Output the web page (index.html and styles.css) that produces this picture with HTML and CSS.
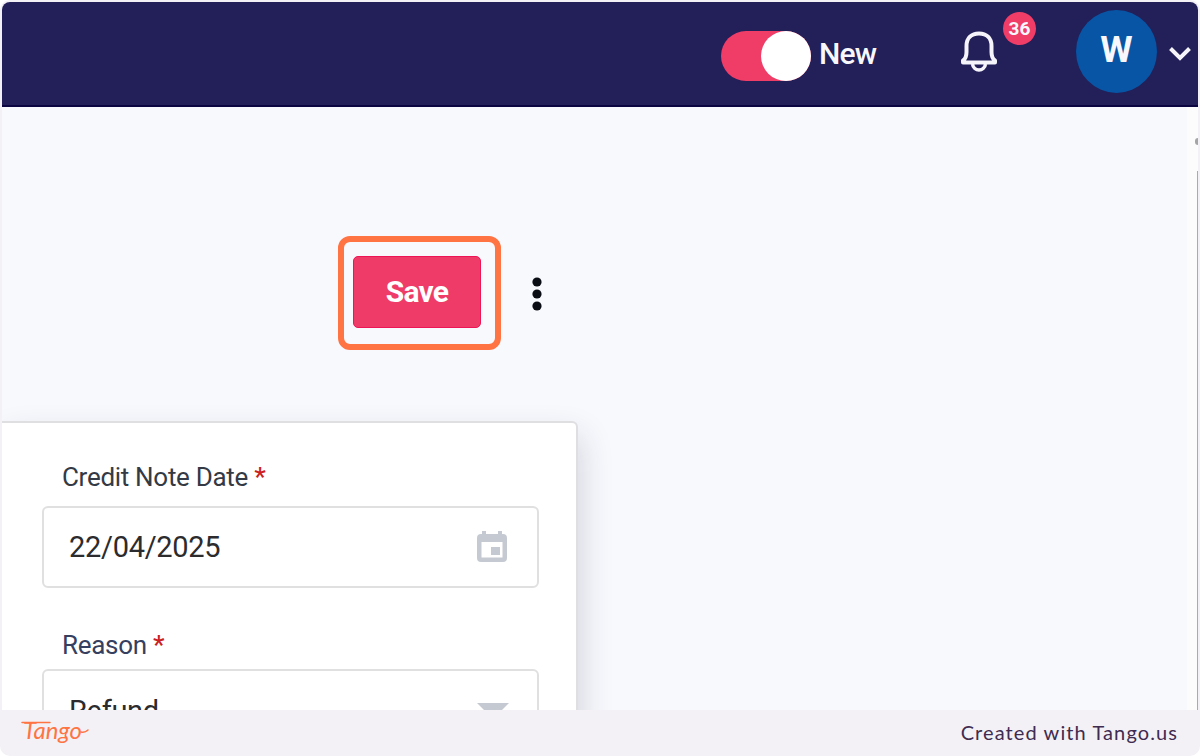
FILE: index.html
```html
<!DOCTYPE html>
<html lang="en">
<head>
    <meta charset="UTF-8">
    <meta name="viewport" content="width=device-width, initial-scale=1.0">
    <title>Credit Note - Save</title>
    <link rel="stylesheet" href="styles.css">
</head>
<body>
    <div class="frame">
        <div class="screen">
            <header class="topbar">
                <div class="toggle"><div class="knob"></div></div>
                <span class="toggle-label">New</span>
                <div class="bell">
                    <svg width="40" height="44" viewBox="0 0 40 44" fill="none" stroke="#f4f4fa" stroke-width="4" stroke-linejoin="round">
                        <path d="M4 33.500H36V31.500C33.500 30 32.500 27 32.500 23V17C32.500 9 27.500 4.500 20 4.500S7.500 9 7.500 17V23C7.500 27 6.500 30 4 31.500Z"/>
                        <path d="M13.500 35C14 39 17 41 20 41S26 39 26.500 35" stroke-width="3.500"/>
                    </svg>
                    <span class="badge">36</span>
                </div>
                <div class="avatar">W</div>
                <svg class="chevron" width="24" height="16" viewBox="0 0 24 16" fill="none" stroke="#f4f4fa" stroke-width="4">
                    <path d="M2.500 2.500L12 12L21.500 2.500"/>
                </svg>
            </header>

            <main class="content">
                <div class="actions">
                    <div class="highlight">
                        <button type="button" class="save">Save</button>
                    </div>
                    <svg class="more" width="12" height="36" viewBox="0 0 12 36" fill="#0b0d14">
                        <circle cx="6" cy="6" r="4.600"/>
                        <circle cx="6" cy="18" r="4.600"/>
                        <circle cx="6" cy="30" r="4.600"/>
                    </svg>
                </div>

                <form class="card">
                    <div class="label">Credit Note Date <span class="required">*</span></div>
                    <div class="field">
                        <span class="value date">22/04/2025</span>
                        <svg class="calendar" width="30" height="34" viewBox="0 0 30 34" fill="#c5cad2">
                            <path fill-rule="evenodd" d="M5 1H9V4H21V1H25V4H26Q30 4 30 8V28Q30 32 26 32H4Q0 32 0 28V8Q0 4 4 4H5ZM4.500 12V27.500H25.500V12Z"/>
                            <rect x="14" y="17" width="9" height="8"/>
                        </svg>
                    </div>
                    <div class="label reason">Reason <span class="required">*</span></div>
                    <div class="field select">
                        <span class="value">Refund</span>
                        <svg class="arrow" width="32" height="16" viewBox="0 0 32 16" fill="#c5cad2">
                            <path d="M0 0H32L16 16Z"/>
                        </svg>
                    </div>
                </form>
                <div class="scrollbar">
                    <div class="scroll-arrow"></div>
                    <div class="thumb"></div>
                </div>
            </main>
        </div>

        <footer class="footer">
            <svg class="logo" width="72" height="36" viewBox="0 0 72 36">
                <text x="3" y="21.500" textLength="59" lengthAdjust="spacingAndGlyphs">Tango</text>
                <path d="M2 5.500H30M61 15Q65 16 68 13" fill="none" stroke="#ff7442" stroke-width="1.500" stroke-linecap="round"/>
            </svg>
            <span class="credit">Created with Tango.us</span>
        </footer>
    </div>
</body>
</html>
```

FILE: styles.css
```css
* {
    box-sizing: border-box;
}
body {
    margin: 0;
    font-family: Roboto, "Liberation Sans", sans-serif;
    background-color: white;
}
.frame {
    width: 1200px;
    height: 756px;
    padding: 2px 2px 0;
    border-radius: 10px;
    background-color: #f3f1f6;
    overflow: hidden;
}
.screen {
    height: 708px;
    display: flex;
    flex-direction: column;
    border-radius: 8px 8px 0 0;
    background-color: #f8f9fd;
    overflow: hidden;
}
.topbar {
    height: 105px;
    flex: none;
    display: flex;
    align-items: flex-start;
    padding-left: 719px;
    background-color: #231f58;
    border-bottom: 2px solid #0b0542;
    color: #f8f8fc;
}
.toggle {
    width: 90px;
    height: 50px;
    margin-top: 29px;
    display: flex;
    justify-content: flex-end;
    border-radius: 25px;
    background-color: #ef3d68;
}
.knob {
    width: 50px;
    height: 50px;
    border-radius: 50%;
    background-color: white;
}
.toggle-label {
    width: 59px;
    margin: 35px 0 0 8px;
    font-size: 30px;
    line-height: 34px;
    font-weight: 500;
    letter-spacing: -0.8px;
}
.bell {
    position: relative;
    width: 40px;
    height: 44px;
    margin: 27px 0 0 81px;
}
.bell svg {
    display: block;
}
.badge {
    position: absolute;
    left: 44px;
    top: -17px;
    width: 33px;
    height: 33px;
    border-radius: 50%;
    background-color: #ef3d68;
    font-size: 19px;
    line-height: 33px;
    font-weight: 700;
    text-align: center;
}
.avatar {
    width: 81px;
    height: 83px;
    margin: 8px 0 0 77px;
    border-radius: 50%;
    background-color: #0855a5;
    font-size: 37px;
    line-height: 80px;
    font-weight: 700;
    text-align: center;
}
.chevron {
    margin: 44px 0 0 11px;
}
.content {
    position: relative;
    flex: 1;
    min-height: 0;
}
.actions {
    display: flex;
    align-items: center;
    padding: 129px 0 0 336px;
}
.highlight {
    width: 163px;
    height: 114px;
    padding: 14px 9px;
    border: 6px solid #ff7442;
    border-radius: 12px;
}
.save {
    display: block;
    width: 128px;
    height: 72px;
    padding: 0 0 2px;
    border: 1px solid #ee1556;
    border-radius: 5px;
    background-color: #ee3b67;
    color: white;
    font-family: inherit;
    font-size: 30px;
    font-weight: 700;
    letter-spacing: -0.8px;
}
.more {
    margin: 2px 0 0 30px;
}
.card {
    width: 576px;
    height: 400px;
    margin-top: 71px;
    padding: 38px 37px 0 40px;
    border: 2px solid #dfdfe1;
    border-left: none;
    border-radius: 0 6px 0 0;
    background-color: white;
    box-shadow: 4px 14px 32px rgba(40, 40, 70, 0.16);
}
.label {
    padding-left: 20px;
    height: 45px;
    font-size: 26px;
    line-height: 32px;
    letter-spacing: -0.3px;
    white-space: nowrap;
    color: #343a45;
}
.reason {
    margin-top: 41px;
    height: 40px;
    color: #354060;
}
.required {
    color: #cc1f1f;
    font-weight: 500;
}
.field {
    height: 82px;
    display: flex;
    align-items: center;
    justify-content: space-between;
    padding: 0 30px 1px 25px;
    border: 2px solid #e0e0e1;
    border-radius: 6px;
}
.select {
    height: 85px;
}
.value {
    font-size: 29px;
    letter-spacing: -0.3px;
    color: #2c2c2e;
}
.arrow {
    margin: 0 -2px 1px 0;
}
.scrollbar {
    position: absolute;
    right: 0;
    top: 0;
    width: 11px;
    height: 100%;
    display: flex;
    flex-direction: column;
    align-items: flex-end;
    background-color: #fcfcfd;
}
.scroll-arrow {
    width: 3px;
    height: 7px;
    margin: 31px 0 26px;
    border-radius: 4px 0 0 4px;
    background-color: #a5a5a7;
}
.thumb {
    width: 1px;
    flex: 1;
    background-color: #aaa9ae;
}
.footer {
    height: 46px;
    display: flex;
    align-items: center;
    justify-content: space-between;
    padding: 0 20px 0 18px;
}
.logo {
    margin-top: 4px;
}
.logo text {
    font-family: Lato, sans-serif;
    font-size: 23px;
    font-style: italic;
    font-weight: 400;
    fill: #ff7442;
}
.credit {
    margin-bottom: 2px;
    font-family: Lato, sans-serif;
    font-size: 20px;
    letter-spacing: 1.1px;
    color: #402b50;
}
```
